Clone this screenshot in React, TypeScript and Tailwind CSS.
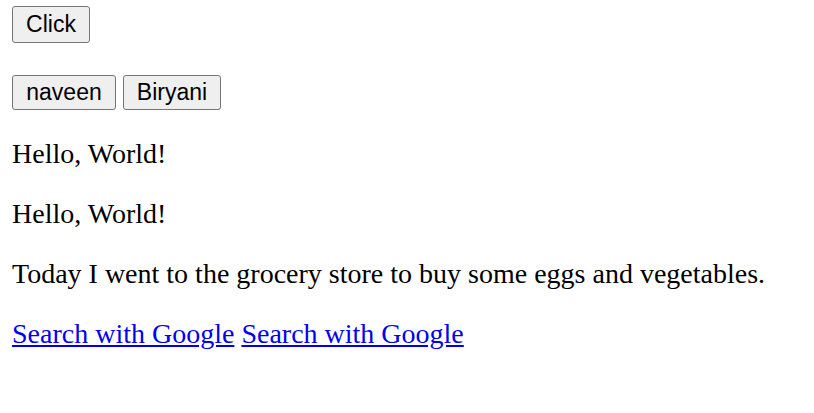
const Btn = ({ label, w, h }: { label: string; w: string; h: string }) => {
  return (
    <button
      className={`${w} ${h} flex items-center justify-center rounded-[3px] border border-[#767676] bg-[#efefef] font-['Liberation_Sans',Arial,sans-serif] text-[23px] leading-none text-black`}>
      {label}
    </button>
  );
};

const App = () => {
  return (
    <div className="min-h-[413px] bg-white px-[12px] pt-[6px] font-['Liberation_Serif','Times_New_Roman',serif] text-[28px] text-black">
      <div className="flex">
        <Btn label="Click" w="w-[78px]" h="h-[37px]" />
      </div>
      <div className="mt-[32px] flex gap-[7px]">
        <Btn label="naveen" w="w-[104px]" h="h-[35px]" />
        <Btn label="Biryani" w="w-[98px]" h="h-[35px]" />
      </div>
      {/* paragraphs */}
      <div className="mt-[28px] flex flex-col gap-[28px] leading-[32px]">
        <p>Hello, World!</p>
        <p>Hello, World!</p>
        <p>Today I went to the grocery store to buy some eggs and vegetables.</p>
        <p>
          <a href="#" className="text-[#0000ee] underline">
            Search with Google
          </a>{" "}
          <a href="#" className="text-[#0000ee] underline">
            Search with Google
          </a>
        </p>
      </div>
    </div>
  );
};

export default App;
